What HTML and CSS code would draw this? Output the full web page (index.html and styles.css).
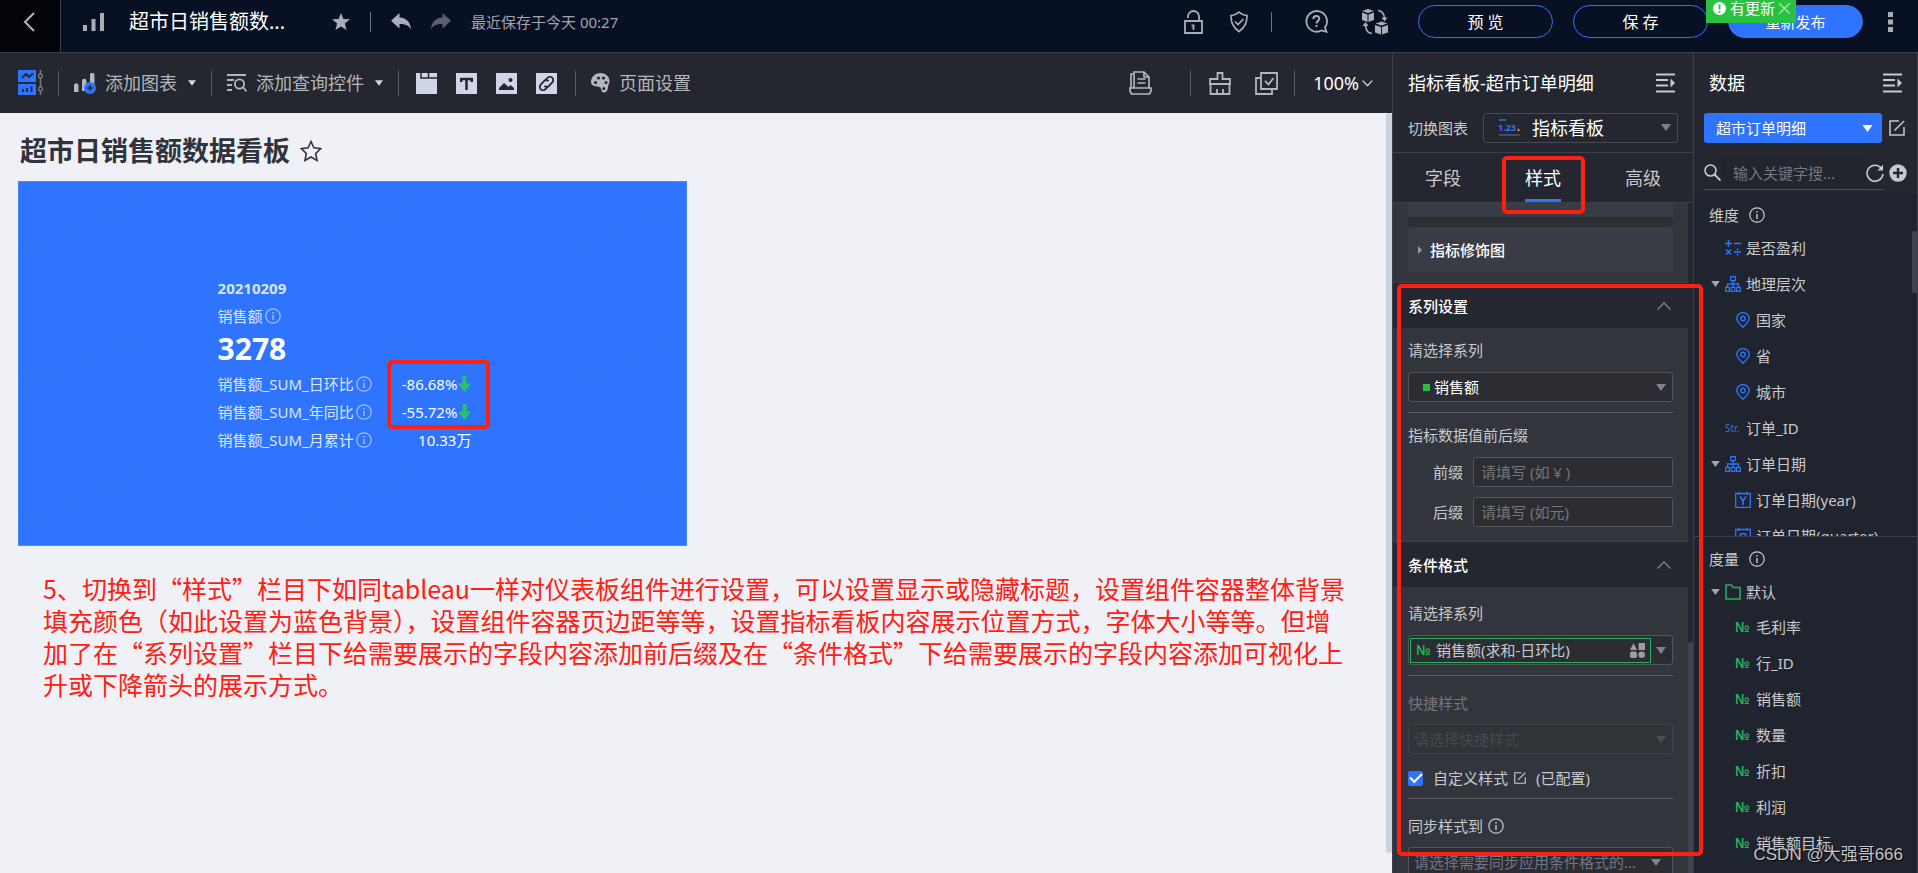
FILE: index.html
```html
<!DOCTYPE html>
<html lang="zh-CN">
<head>
<meta charset="utf-8">
<meta name="viewport" content="width=device-width, initial-scale=1">
<title>超市日销售额数据看板</title>
<link rel="stylesheet" href="styles.css">
</head>
<body>
<svg class="sprite" aria-hidden="true">
  <symbol id="caret" viewBox="0 0 10 7"><path d="M0 0h10L5 7z" fill="currentColor"/></symbol>
  <symbol id="chev-up" viewBox="0 0 14 8"><path d="M.5 7.5 7 1l6.500 6.500" fill="none" stroke="currentColor" stroke-width="1.300"/></symbol>
  <symbol id="info" viewBox="0 0 16 16"><circle cx="8" cy="8" r="7.200" fill="none" stroke="currentColor" stroke-width="1.200"/><path d="M8 7v5M8 4v1.600" stroke="currentColor" stroke-width="1.400"/></symbol>
  <symbol id="edit" viewBox="0 0 16 16"><path d="M10 1H1v14h14V7M15 1v0M5.500 10.500 15 1" fill="none" stroke="currentColor" stroke-width="1.500"/></symbol>
  <symbol id="collapse" viewBox="0 0 20 20"><path d="M0 1.500h19M0 7h12M0 12.500h12M0 18.500h19" stroke="currentColor" stroke-width="1.800"/><path d="M14.500 5.500 19 10l-4.500 4.500z" fill="currentColor"/></symbol>
  <symbol id="tree" viewBox="0 0 16 16"><path d="M5.700.7h4.600v4H5.700zM.7 11.300h3.600v4H.7zM6.200 11.300h3.600v4H6.200zM11.700 11.300h3.600v4h-3.600zM8 5v6M2.500 11V8h11v3" fill="none" stroke="currentColor" stroke-width="1.300"/></symbol>
  <symbol id="pin" viewBox="0 0 14 16"><path d="M7 15.200C3.500 11.800.8 9.500.8 6.600a6.200 6 0 0 1 12.400 0c0 2.900-2.700 5.200-6.200 8.600z" fill="none" stroke="currentColor" stroke-width="1.400"/><circle cx="7" cy="6.500" r="2.200" fill="none" stroke="currentColor" stroke-width="1.400"/></symbol>
  <symbol id="bars" viewBox="0 0 22 18"><path d="M0 12h4v6H0zM8.500 6h4v12h-4zM17 0h4v18h-4z" fill="currentColor"/></symbol>
  <symbol id="down" viewBox="0 0 13 16"><path d="M4.500 0h4v7.500H13L6.500 16 0 7.500h4.500z" fill="currentColor"/></symbol>
  <symbol id="undo" viewBox="0 0 20 17"><path d="M8.500 0v4.500C16 5 19.500 9.500 20 16.500c-2-3.800-5.500-5.500-11.500-5.500v4.500L0 7.800z" fill="currentColor"/></symbol>
</svg>

<header class="topbar">
  <a class="back" href="#" aria-label="返回"><svg width="12" height="20" viewBox="0 0 12 20"><path d="M11 1 2 10l9 9" fill="none" stroke="#b4b6ba" stroke-width="2"/></svg></a>
  <div class="topbar-left">
    <svg class="doc-icon" width="22" height="18"><use href="#bars"/></svg>
    <span class="doc-title">超市日销售额数...</span>
    <button class="icon-btn" aria-label="收藏"><svg width="18" height="17" viewBox="0 0 18 17"><path d="m9 0 2.400 5.900 6.600.4-5.100 4.200 1.700 6.400L9 13.400l-5.600 3.500 1.700-6.400L0 6.300l6.600-.4z" fill="#a9adb5"/></svg></button>
    <span class="rule"></span>
    <button class="icon-btn" aria-label="撤销"><svg width="20" height="17"><use href="#undo"/></svg></button>
    <button class="icon-btn dim" aria-label="重做"><svg class="flip" width="20" height="17"><use href="#undo"/></svg></button>
    <span class="saved">最近保存于今天 00:27</span>
  </div>
  <div class="topbar-icons">
    <button class="icon-btn" aria-label="锁定"><svg width="19" height="24" viewBox="0 0 19 24"><path d="M1 11h17v12H1zM4 8V6.500a5.500 5.500 0 0 1 11 0V11M9.500 15v5M7.500 15.500h3" fill="none" stroke="currentColor" stroke-width="1.800"/></svg></button>
    <button class="icon-btn" aria-label="权限"><svg width="18" height="22" viewBox="0 0 18 22"><path d="M9 1.200c2 1.900 4.500 3 8 3.500-.2 7-1.500 11-8 16-6.500-5-7.800-9-8-16 3.500-.5 6-1.600 8-3.500z" fill="none" stroke="currentColor" stroke-width="1.700"/><path d="m5 10.500 3 3 5.500-5.500" fill="none" stroke="currentColor" stroke-width="1.700"/></svg></button>
    <span class="rule"></span>
    <button class="icon-btn" aria-label="帮助"><svg width="23" height="23" viewBox="0 0 23 23"><path d="M20 17.500a10.300 10.300 0 1 0-3.500 3l5 1.300z" fill="none" stroke="currentColor" stroke-width="1.800"/><path d="M8.300 9c0-4 6-4 6-.4 0 2.400-2.800 2.200-2.800 5M11.500 15v2" fill="none" stroke="currentColor" stroke-width="2"/></svg></button>
    <button class="icon-btn" aria-label="资源迁移"><svg width="26" height="26" viewBox="0 0 26 26"><g fill="currentColor"><path d="m6 0 6 2-6 2-6-2zM0 3.500l5.500 2v7.500L0 11zM12 3.500l-5.500 2v7.500l5.500-2zM19.500 12.500l6 2-6 2-6-2zM13 16l6 2v7.500l-6-2zM26 16l-6 2v7.500l6-2z"/><path d="M19.500 8.500h6l-3 4zM.5 17h6l-3-4z"/></g><path d="M16 1.500c4 .5 6.200 3 6.500 8M10 24.500c-4-.5-6.200-3-6.500-8" fill="none" stroke="currentColor" stroke-width="1.600"/></svg></button>
  </div>
  <div class="topbar-actions">
    <button class="pill">预 览</button>
    <button class="pill">保 存</button>
    <div class="publish">
      <button class="pill primary">重新发布</button>
      <div class="update-tip"><svg width="13" height="13" viewBox="0 0 13 13"><circle cx="6.500" cy="6.500" r="6.500" fill="#fff"/><path d="M6.500 2.500v5M6.500 9v1.700" stroke="#2ac143" stroke-width="1.800"/></svg><span>有更新</span><button class="tip-close" aria-label="关闭"><svg width="11" height="11" viewBox="0 0 11 11"><path d="m0 0 11 11M11 0 0 11" stroke="#a5eaaf" stroke-width="1.300"/></svg></button></div>
    </div>
    <button class="icon-btn kebab" aria-label="更多"><svg width="5" height="20" viewBox="0 0 5 20"><path d="M0 0h5v5H0zM0 7.500h5v5H0zM0 15h5v5H0z" fill="currentColor"/></svg></button>
  </div>
</header>

<div class="workspace">
  <div class="editor">
    <div class="toolbar">
      <button class="icon-btn" aria-label="布局"><svg width="25" height="26" viewBox="0 0 25 26"><path d="M0 0h18v12H0zM0 14h18v11H0z" fill="#2e74ff"/><path d="m4 8 4-4 3 3 4-3.500" fill="none" stroke="#24272f" stroke-width="2"/><path d="M5 22v-3M9 22v-4M13.500 22v-5.500" stroke="#24272f" stroke-width="1.800"/><path d="M22.500 0v4M22.500 8v9M22.500 21v4" stroke="#77797d" stroke-width="1.600"/><circle cx="22.500" cy="6" r="2" fill="none" stroke="#77797d" stroke-width="1.300"/><circle cx="22.500" cy="19" r="2" fill="none" stroke="#77797d" stroke-width="1.300"/></svg></button>
      <span class="rule tall"></span>
      <button class="tool"><svg width="22" height="21" viewBox="0 0 22 21"><path d="M0 12.500a1.500 1.500 0 0 1 4.500 0V19H0zM8 8a2 2 0 0 1 4.500 0v10H8zM16 2a2 2 0 0 1 4.500 0v12H16z" fill="#b4b6ba"/><circle cx="16" cy="15" r="6" fill="#2e74ff"/><path d="M13 15h6M16 12v6" stroke="#24272f" stroke-width="1.500"/></svg><span>添加图表</span><svg class="tool-caret" width="8" height="6"><use href="#caret"/></svg></button>
      <span class="rule tall"></span>
      <button class="tool"><svg width="20" height="18" viewBox="0 0 20 18"><path d="M0 1h19M0 6h7M0 11h5M0 16h5" stroke="currentColor" stroke-width="1.800"/><circle cx="12.500" cy="10" r="4.600" fill="none" stroke="currentColor" stroke-width="1.800"/><path d="m16 13 3.500 4.500" stroke="currentColor" stroke-width="1.800"/></svg><span>添加查询控件</span><svg class="tool-caret" width="8" height="6"><use href="#caret"/></svg></button>
      <span class="rule tall"></span>
      <div class="widgets">
        <button class="icon-btn" aria-label="选项卡"><svg width="21" height="21" viewBox="0 0 21 21"><path d="M0 0h21v21H0z" fill="#d0d6e8"/><path d="M5 0v5h16M12.500 0v5" fill="none" stroke="#24272f" stroke-width="1.500"/></svg></button>
        <button class="icon-btn" aria-label="文本"><svg width="21" height="21" viewBox="0 0 21 21"><path d="M0 0h21v21H0z" fill="#d0d6e8"/><path d="M4.500 6h12M10.500 5v12M5.200 5v4M15.800 5v4" fill="none" stroke="#24272f" stroke-width="2.500"/></svg></button>
        <button class="icon-btn" aria-label="图片"><svg width="21" height="21" viewBox="0 0 21 21"><path d="M0 0h21v21H0z" fill="#d0d6e8"/><path d="M3 17v-2l5-5 4.500 4 2-2 3.500 3v2z" fill="#24272f"/><circle cx="14.500" cy="7" r="2" fill="#24272f"/></svg></button>
        <button class="icon-btn" aria-label="链接"><svg width="21" height="21" viewBox="0 0 21 21"><path d="M0 0h21v21H0z" fill="#d0d6e8"/><g fill="none" stroke="#24272f" stroke-width="1.800"><path d="m9 7.500 2.500-2.700a3.300 3.300 0 0 1 4.800 4.600L13 12.800a3 3 0 0 1-4.500 0"/><path d="m12 13.500-2.500 2.700a3.300 3.300 0 0 1-4.800-4.600L8 8.200a3 3 0 0 1 4.500 0"/></g></svg></button>
      </div>
      <span class="rule tall"></span>
      <button class="tool"><svg width="19" height="20" viewBox="0 0 19 20"><path d="M9.500 0C15 0 19 4 18.500 9c-.3 2.600-1.500 3-1.500 5 0 3-1.500 5.500-4 5.500-3.500 0-2-4.500-4.500-5.500S0 14 0 9c0-5 4-9 9.500-9z" fill="#b4b6ba"/><g fill="#24272f"><circle cx="4.500" cy="9.500" r="1.600"/><circle cx="7.500" cy="5" r="1.600"/><circle cx="12.500" cy="5" r="1.600"/><circle cx="15" cy="9.500" r="1.500"/><circle cx="12.800" cy="15.500" r="1.500"/></g></svg><span>页面设置</span></button>
      <div class="toolbar-right">
        <button class="icon-btn" aria-label="模板"><svg width="23" height="24" viewBox="0 0 23 24"><path d="M2 17V3h2M5 17V1h10l5 5v11M15 1v5h5M8.500 8h8M8.500 12h8M1 17h21v3l-1.500 3h-18L1 20z" fill="none" stroke="currentColor" stroke-width="1.700"/></svg></button>
        <span class="rule tall"></span>
        <button class="icon-btn" aria-label="清理"><svg width="22" height="23" viewBox="0 0 22 23"><path d="M8.500 7V1h5v6H21v5H1V7zM1.500 12v10h19V12M8 22v-5M14 22v-5" fill="none" stroke="currentColor" stroke-width="1.800"/></svg></button>
        <button class="icon-btn" aria-label="批量选择"><svg width="23" height="23" viewBox="0 0 23 23"><path d="M6 1h16v16H6zM6 6H1v16h16v-5M10 9l3.500 3.500 5-6.500" fill="none" stroke="currentColor" stroke-width="1.800"/></svg></button>
        <span class="rule tall"></span>
        <button class="zoom"><span>100%</span><svg width="11" height="7" viewBox="0 0 11 7"><path d="m.7.7 4.800 5 4.800-5" fill="none" stroke="#e8e8ea" stroke-width="1.200"/></svg></button>
      </div>
    </div>

    <main class="canvas">
      <div class="board-title"><h1>超市日销售额数据看板</h1><svg width="22" height="22" viewBox="0 0 22 22"><path d="m11 1.500 2.900 6.300 6.800.9-5 4.800 1.300 6.900-6-3.400-6 3.400 1.300-6.900-5-4.800 6.800-.9z" fill="none" stroke="#30333b" stroke-width="1.600"/></svg></div>
      <div class="board">
        <section class="card">
          <div class="marks" aria-hidden="true">
            <span>aliyun8203139630</span><span>aliyun8203139630</span><span>aliyun8203139630</span>
            <span>aliyun8203139630</span><span>aliyun8203139630</span><span>aliyun8203139630</span>
            <span>aliyun8203139630</span><span>aliyun8203139630</span><span>aliyun8203139630</span>
          </div>
          <div class="kpi">
            <div class="kpi-date">20210209</div>
            <div class="kpi-name">销售额<svg width="16" height="16"><use href="#info"/></svg></div>
            <div class="kpi-value">3278</div>
            <div class="kpi-box">
              <dl class="kpi-list">
                <dt>销售额_SUM_日环比<svg width="16" height="16"><use href="#info"/></svg></dt><dd>-86.68%<svg class="down" width="13" height="16"><use href="#down"/></svg></dd>
                <dt>销售额_SUM_年同比<svg width="16" height="16"><use href="#info"/></svg></dt><dd>-55.72%<svg class="down" width="13" height="16"><use href="#down"/></svg></dd>
                <dt>销售额_SUM_月累计<svg width="16" height="16"><use href="#info"/></svg></dt><dd>10.33万</dd>
              </dl>
              <span class="mark-box mark-trend"></span>
            </div>
          </div>
        </section>
      </div>
      <p class="note">5、切换到“样式”栏目下如同tableau一样对仪表板组件进行设置，可以设置显示或隐藏标题，设置组件容器整体背景<br>填充颜色（如此设置为蓝色背景），设置组件容器页边距等等，设置指标看板内容展示位置方式，字体大小等等。但增<br>加了在“系列设置”栏目下给需要展示的字段内容添加前后缀及在“条件格式”下给需要展示的字段内容添加可视化上<br>升或下降箭头的展示方式。</p>
      <span class="canvas-thumb"></span>
    </main>
  </div>

  <aside class="config">
    <div class="panel-head"><h2>指标看板-超市订单明细</h2><button class="icon-btn" aria-label="收起"><svg width="20" height="20"><use href="#collapse"/></svg></button></div>
    <div class="switch-row">
      <label for="chart">切换图表</label>
      <div class="field chart-field">
        <svg width="22" height="17" viewBox="0 0 22 17"><path d="M1 1h7" stroke="#2e5fc0" stroke-width="2"/><text x="0" y="12" class="svg-123">1.23</text><path d="m19 12 1.500-3 1.500 3z" fill="#f08c28"/><path d="M1 16h21" stroke="#55585f" stroke-width="1.500"/></svg>
        <select id="chart"><option>指标看板</option></select>
        <svg class="caret" width="10" height="7"><use href="#caret"/></svg>
      </div>
    </div>
    <nav class="tabs">
      <button class="tab">字段</button>
      <button class="tab active">样式</button>
      <button class="tab">高级</button>
      <span class="mark-box mark-tab"></span>
    </nav>
    <div class="config-body">
      <div class="group">
        <div class="stub"></div>
        <div class="stub-gap"></div>
        <button class="fold"><svg width="4" height="8" viewBox="0 0 4 8"><path d="M0 0v8l4-4z" fill="#999ba0"/></svg><span>指标修饰图</span></button>
      </div>
      <section>
        <h3 class="section-head">系列设置<svg width="14" height="8"><use href="#chev-up"/></svg></h3>
        <div class="section-body series">
          <label class="line" for="series">请选择系列</label>
          <div class="field"><span class="dot"></span><select id="series"><option>销售额</option></select><svg class="caret" width="10" height="7"><use href="#caret"/></svg></div>
          <hr>
          <div class="line">指标数据值前后缀</div>
          <div class="affix"><label for="prefix">前缀</label><input id="prefix" type="text" placeholder="请填写 (如 ¥ )"></div>
          <div class="affix"><label for="suffix">后缀</label><input id="suffix" type="text" placeholder="请填写 (如元)"></div>
        </div>
      </section>
      <section>
        <h3 class="section-head">条件格式<svg width="14" height="8"><use href="#chev-up"/></svg></h3>
        <div class="section-body cond">
          <label class="line" for="cond">请选择系列</label>
          <div class="field combo"><div class="chip"><span class="num">№</span><select id="cond"><option>销售额(求和-日环比)</option></select><svg width="15" height="15" viewBox="0 0 15 15"><path d="m3.500 0 3.500 7H0zM8.500 0H15v7H8.500zM1.500 8.500h4L7 10v4l-1.500 1h-4L0 14v-4z" fill="#9b9da1"/><circle cx="11.700" cy="11.700" r="3.300" fill="#9b9da1"/></svg></div><svg class="caret" width="10" height="7"><use href="#caret"/></svg></div>
          <hr>
          <label class="line off" for="quick">快捷样式</label>
          <div class="field off"><select id="quick" disabled><option>请选择快捷样式</option></select><svg class="caret" width="10" height="7"><use href="#caret"/></svg></div>
          <div class="check-row"><input id="custom" type="checkbox" checked><label for="custom">自定义样式</label><svg width="12" height="12"><use href="#edit"/></svg><span>(已配置)</span></div>
          <hr>
          <label class="line sync" for="sync">同步样式到<svg width="16" height="16"><use href="#info"/></svg></label>
          <div class="field hint"><select id="sync"><option>请选择需要同步应用条件格式的...</option></select><svg class="caret" width="10" height="7"><use href="#caret"/></svg></div>
        </div>
      </section>
      <span class="config-thumb"></span>
    </div>
    <span class="mark-box mark-config"></span>
  </aside>

  <aside class="data">
    <div class="panel-head"><h2>数据</h2><button class="icon-btn" aria-label="收起"><svg width="20" height="20"><use href="#collapse"/></svg></button></div>
    <div class="source-row">
      <div class="source"><select aria-label="数据集"><option>超市订单明细</option></select><svg width="11" height="7" viewBox="0 0 10 7"><use href="#caret"/></svg></div>
      <button class="icon-btn" aria-label="编辑数据集"><svg width="16" height="16"><use href="#edit"/></svg></button>
    </div>
    <div class="search-row">
      <div class="search"><svg width="17" height="17" viewBox="0 0 17 17"><circle cx="6.500" cy="6.500" r="5.500" fill="none" stroke="#c8c9cc" stroke-width="1.600"/><path d="m10.500 10.500 6 6" stroke="#c8c9cc" stroke-width="1.800"/></svg><input type="text" aria-label="搜索字段" placeholder="输入关键字搜..."><button class="icon-btn" aria-label="刷新"><svg width="18" height="18" viewBox="0 0 18 18"><path d="M15.500 4.500A8 8 0 1 0 17 10" fill="none" stroke="#c8c9cc" stroke-width="1.600"/><path d="M17 .8v5.700h-5.500z" fill="#c8c9cc"/></svg></button></div>
      <button class="icon-btn" aria-label="新增"><svg width="18" height="18" viewBox="0 0 18 18"><circle cx="9" cy="9" r="8.700" fill="#c8c9cc"/><path d="M4 9h10M9 4v10" stroke="#24272f" stroke-width="2.400"/></svg></button>
    </div>
    <section class="fields dims">
      <h3>维度<svg width="16" height="16"><use href="#info"/></svg></h3>
      <ul>
        <li><svg class="blue" width="16" height="16" viewBox="0 0 16 16"><path d="M0 3.500h7M3.500 0v7M9 3.500h7M1 9.500l5 5M6 9.500l-5 5M9 12h7M12.500 8.500v1.700M12.500 13.800v1.700" stroke="currentColor" stroke-width="1.500"/></svg><span>是否盈利</span></li>
        <li class="parent"><svg class="twist" width="9" height="6"><use href="#caret"/></svg><svg class="blue" width="16" height="16"><use href="#tree"/></svg><span>地理层次</span></li>
        <li class="child"><svg class="blue" width="16" height="16"><use href="#pin"/></svg><span>国家</span></li>
        <li class="child"><svg class="blue" width="16" height="16"><use href="#pin"/></svg><span>省</span></li>
        <li class="child"><svg class="blue" width="16" height="16"><use href="#pin"/></svg><span>城市</span></li>
        <li><span class="str">Str.</span><span>订单_ID</span></li>
        <li class="parent"><svg class="twist" width="9" height="6"><use href="#caret"/></svg><svg class="blue" width="16" height="16"><use href="#tree"/></svg><span>订单日期</span></li>
        <li class="child"><svg class="blue" width="16" height="16" viewBox="0 0 16 16"><path d="M.7 1.500h14.600v13.800H.7zM4 0v3M12 0v3" fill="none" stroke="currentColor" stroke-width="1.300"/><path d="m5 4.500 3 4.500 3-4.500M8 9v4" fill="none" stroke="currentColor" stroke-width="1.600"/></svg><span>订单日期(year)</span></li>
        <li class="child"><svg class="blue" width="16" height="16" viewBox="0 0 16 16"><path d="M.7 1.500h14.600v13.800H.7zM4 0v3M12 0v3" fill="none" stroke="currentColor" stroke-width="1.300"/><circle cx="8" cy="8.500" r="3" fill="none" stroke="currentColor" stroke-width="1.600"/></svg><span>订单日期(quarter)</span></li>
      </ul>
      <span class="data-thumb"></span>
    </section>
    <section class="fields measures">
      <h3>度量<svg width="16" height="16"><use href="#info"/></svg></h3>
      <ul>
        <li class="parent"><svg class="twist" width="9" height="6"><use href="#caret"/></svg><svg class="green" width="16" height="16" viewBox="0 0 16 16"><path d="M1 15V1h5.500l1.500 2.500h7V15z" fill="none" stroke="currentColor" stroke-width="1.500"/></svg><span>默认</span></li>
        <li class="child"><span class="num">№</span><span>毛利率</span></li>
        <li class="child"><span class="num">№</span><span>行_ID</span></li>
        <li class="child"><span class="num">№</span><span>销售额</span></li>
        <li class="child"><span class="num">№</span><span>数量</span></li>
        <li class="child"><span class="num">№</span><span>折扣</span></li>
        <li class="child"><span class="num">№</span><span>利润</span></li>
        <li class="child"><span class="num">№</span><span>销售额目标</span></li>
      </ul>
    </section>
    <span class="credit">CSDN @大强哥666</span>
  </aside>
</div>
</body>
</html>
```

FILE: styles.css
```css
* { box-sizing: border-box; }

body {
  margin: 0;
  height: 100vh;
  overflow: hidden;
  display: flex;
  flex-direction: column;
  background: #24272f;
  color: #c8c9cc;
  font: 15px/20px "Noto Sans", "Noto Sans CJK SC", sans-serif;
}

button, input, select {
  margin: 0;
  padding: 0;
  border: 0;
  background: none;
  color: inherit;
  font: inherit;
}

select { appearance: none; min-width: 0; flex: 1; height: 28px; outline: 0; opacity: 1; }
input { outline: 0; min-width: 0; }
h1, h2, h3, p, ul, dl, dd { margin: 0; padding: 0; font-weight: 400; }
svg { flex: none; display: block; }
.sprite { position: absolute; width: 0; height: 0; }
.icon-btn { display: flex; flex: none; color: #a9adb5; }
.rule { flex: none; width: 1px; height: 20px; background: #70747c; }
.rule.tall { height: 25px; background: #5a5d63; }

.mark-box {
  position: absolute;
  z-index: 5;
  border: 4px solid #fe2012;
  border-radius: 5px;
  pointer-events: none;
}

/* top bar */
.topbar {
  flex: none;
  display: flex;
  height: 53px;
  background: #081024;
  border-bottom: 1px solid #3d404b;
}
.back {
  width: 61px;
  padding: 12px 0 0 23px;
  background: #02040a;
  border-right: 1px solid #3d404b;
}
.topbar-left, .topbar-icons, .topbar-actions {
  display: flex;
  align-items: center;
  height: 43px;
}
.topbar-left { flex: 1; gap: 20px; padding-left: 22px; }
.doc-icon { color: #a9adb5; }
.doc-title { width: 183px; margin-left: 4px; color: #fff; font-size: 20px; line-height: 28px; white-space: nowrap; }
.dim { opacity: .5; }
.flip { transform: scaleX(-1); }
.saved { color: #a2a5ad; white-space: nowrap; }
.topbar-icons { gap: 27px; padding-right: 30px; }
.topbar-icons .rule { margin: 0 6px 0 -4px; }
.topbar-icons .icon-btn:last-child { margin-left: 7px; }
.topbar-actions { gap: 20px; padding-right: 25px; }
.pill {
  width: 135px;
  height: 33px;
  border: 1px solid #2e74ff;
  border-radius: 17px;
  color: #fff;
  font-size: 16px;
}
.pill.primary { background: #2e74ff; font-size: 15px; }
.publish { position: relative; }
.update-tip {
  position: absolute;
  top: -5px;
  left: -22px;
  z-index: 2;
  display: flex;
  align-items: center;
  gap: 4px;
  height: 23px;
  padding: 0 6px 7px 7px;
  background: #2ac143;
  color: #fff;
  white-space: nowrap;
}
.tip-close { display: flex; }
.kebab { margin-left: 5px; }

/* workspace */
.workspace { flex: 1; min-height: 0; display: flex; }
.editor { flex: 1; min-width: 0; display: flex; flex-direction: column; }
.toolbar {
  flex: none;
  display: flex;
  align-items: center;
  gap: 15px;
  height: 60px;
  padding: 0 19px 0 18px;
  color: #b4b6ba;
}
.tool { display: flex; align-items: center; gap: 9px; font-size: 18px; line-height: 26px; white-space: nowrap; }
.tool-caret { color: #d0d6e8; margin-left: 2px; }
.widgets { display: flex; gap: 19px; padding: 0 3px 0 2px; }
.toolbar-right { display: flex; align-items: center; gap: 18px; margin-left: auto; }
.toolbar-right .icon-btn { color: #b4b6ba; }
.toolbar-right .icon-btn:first-child { margin-right: 20px; }
.toolbar-right .icon-btn + .icon-btn { margin: 0 -2px 0 6px; }
.zoom { display: flex; align-items: center; gap: 3px; color: #fff; font-size: 18px; line-height: 26px; }

.canvas {
  position: relative;
  flex: 1;
  min-height: 0;
  overflow: hidden;
  padding: 18px 24px 0 18px;
  background: #eff1f6;
}
.canvas-thumb { position: absolute; top: 0; right: 0; bottom: 20px; width: 6px; background: #cdd2de; border-radius: 3px; }
.board-title { display: flex; align-items: center; gap: 10px; padding-left: 2px; color: #30333b; }
.board-title h1 { font-size: 27px; line-height: 40px; font-weight: 600; }
.board { display: grid; grid-template-columns: 1fr 1fr; gap: 12px; margin-top: 10px; }
.card {
  position: relative;
  display: flex;
  align-items: center;
  justify-content: center;
  min-height: 365px;
  background: #2e74ff;
  border: 1px solid #4488fb;
  overflow: hidden;
}
.marks {
  position: absolute;
  inset: 0;
  display: grid;
  grid-template: repeat(3, 136px) / repeat(3, 272px);
  align-content: start;
  color: rgba(90, 110, 160, .22);
}
.marks span { place-self: start; width: 134px; margin: 31px 0 0 -2px; transform: rotate(-23deg); }
.kpi { position: relative; padding-right: 16px; color: #fff; line-height: 28px; }
.kpi-date { font-weight: 700; color: #d8e5ff; }
.kpi-name, .kpi-list dt { display: flex; align-items: center; gap: 2px; color: #dbe7ff; }
.kpi svg { color: #a5c4ff; }
.kpi-value { font-size: 30px; font-weight: 700; line-height: 38px; padding-bottom: 2px; }
.kpi-box { position: relative; }
.kpi-list { display: grid; grid-template-columns: auto auto; column-gap: 30px; }
.kpi-list dd { display: flex; align-items: center; justify-content: flex-end; gap: 1px; white-space: nowrap; }
.kpi .down { color: #27c26b; }
.mark-trend { top: -10px; right: -19px; width: 103px; height: 69px; }
.note {
  margin: 26px 0 0 25px;
  color: #fe2012;
  font: 25px/32px "Noto Sans CJK SC", sans-serif;
  white-space: nowrap;
}

/* configuration panel */
.config {
  position: relative;
  flex: none;
  width: 301px;
  display: flex;
  flex-direction: column;
  border-left: 1px solid #3d404b;
}
.panel-head { flex: none; display: flex; align-items: center; justify-content: space-between; height: 60px; padding: 0 17px 0 15px; }
.panel-head h2 { color: #fff; font-size: 18px; line-height: 26px; white-space: nowrap; }
.panel-head .icon-btn { color: #c8c9cc; }
.field {
  display: flex;
  align-items: center;
  height: 30px;
  padding: 0 6px 0 5px;
  border: 1px solid #52555b;
  border-radius: 3px;
  background: #2c2d32;
  color: #fff;
}
.caret { color: #7d8190; }
.switch-row { flex: none; display: flex; align-items: center; gap: 15px; height: 40px; padding: 0 15px 10px; border-bottom: 1px solid #3d4046; }
.chart-field { flex: 1; gap: 12px; padding-left: 14px; background: none; font-size: 18px; border-color: #484b52; }
.svg-123 { font: 700 9px "Noto Sans", sans-serif; fill: #2e74ff; }
.tabs { position: relative; flex: none; display: flex; justify-content: space-between; height: 50px; padding: 0 32px; border-bottom: 1px solid #3d4046; }
.tab { border-bottom: 3px solid transparent; padding-top: 4px; font-size: 18px; }
.tab.active { color: #fff; border-color: #2e74ff; }
.mark-tab { top: 3px; left: 109px; width: 83px; height: 58px; }
.mark-config { top: 231px; right: -10px; bottom: 17px; left: 4px; }

.config-body { position: relative; flex: 1; min-height: 0; overflow: hidden; padding-right: 5px; }
.config-thumb { position: absolute; right: 0; bottom: 0; top: 439px; width: 5px; background: #41444f; border-radius: 3px 3px 0 0; }
.group { padding: 0 15px 10px; background: #32353c; border-bottom: 1px solid #3f4248; }
.stub { height: 14px; background: #393c44; }
.stub-gap { height: 10px; background: #2d2e33; }
.fold { display: flex; align-items: center; gap: 8px; width: 100%; height: 45px; padding-left: 10px; border-radius: 3px; background: #393c44; color: #fff; font-weight: 500; }
.section-head { display: flex; align-items: center; justify-content: space-between; height: 45px; padding: 0 17px 0 15px; color: #fff; font-size: 15px; font-weight: 500; }
.section-head svg { color: #7d8190; }
.section-body { display: flex; flex-direction: column; padding: 0 15px; background: #32353c; }
.section-body hr { align-self: stretch; height: 1px; margin: 10px 0 0; border: 0; background: #5a5d63; }
.line { display: flex; align-items: center; gap: 5px; height: 44px; }
.series { padding-bottom: 14px; border-bottom: 1px solid #3f4248; }
.series .field { padding-left: 14px; gap: 4px; }
.series > .line + .affix { margin-top: 0; }
.dot { width: 7px; height: 7px; background: #2ac143; }
.affix { display: flex; align-items: center; gap: 10px; margin-top: 10px; padding-left: 25px; }
.affix input { flex: 1; height: 30px; padding: 0 7px; border: 1px solid #52555b; border-radius: 3px; background: #2c2d32; }
::placeholder { color: #74767c; opacity: 1; }
.cond { padding-top: 4px; }
.combo { padding-left: 1px; }
.chip { flex: 1; display: flex; align-items: center; gap: 4px; height: 25px; margin-right: 5px; padding: 0 5px; border: 1px solid #27b15c; color: #c8c9cc; }
.chip select { height: 23px; }
.num { flex: none; width: 16px; color: #27b15c; font-size: 14px; font-weight: 600; }
.cond hr + .line { height: 48px; padding-top: 5px; }
.off { color: #74767c; }
.field.off { border-color: #3f4248; background: #303338; color: #45484f; }
.field.off .caret { color: #4d505a; }
.check-row { display: flex; align-items: center; gap: 6px; height: 20px; margin-top: 14px; }
.check-row input {
  appearance: none;
  display: grid;
  place-items: center;
  width: 15px;
  height: 15px;
  margin-right: 4px;
  border-radius: 2px;
  background: #2e74ff;
}
.check-row input::after { content: ""; width: 10px; height: 5px; margin-top: -3px; border: solid #fff; border-width: 0 0 2px 2px; transform: rotate(-45deg); }
.check-row span { margin-left: 4px; }
.hint { color: #6f768a; }
.hint .caret { margin-right: 5px; }

/* data panel */
.data { position: relative; flex: none; width: 225px; display: flex; flex-direction: column; border-left: 1px solid #3d404b; border-right: 1px solid #3d404b; }
.data .panel-head { padding-right: 14px; }
.source-row { flex: none; display: flex; align-items: center; gap: 7px; padding: 0 12px 0 10px; }
.source { flex: 1; display: flex; align-items: center; height: 30px; padding: 0 9px 0 12px; border-radius: 3px; background: #2e74ff; color: #fff; }
.source-row .icon-btn { color: #c8c9cc; }
.search-row { flex: none; display: flex; align-items: center; gap: 5px; padding: 13px 10px 4px; }
.search { flex: 1; min-width: 0; display: flex; align-items: center; height: 34px; border-bottom: 1px solid #4a4d53; }
.search input { flex: 1; height: 32px; padding-left: 12px; background: #22252d; }
.fields { position: relative; min-height: 0; overflow: hidden; background: #20242e; }
.dims { flex: 343; padding-top: 5px; border-bottom: 1px solid #3d404b; }
.measures { flex: 335; padding-top: 6px; }
.fields h3 { display: flex; align-items: center; gap: 10px; height: 32px; padding-left: 15px; font-size: 15px; }
.dims h3 { height: 31px; }
.fields ul { list-style: none; }
.fields li { display: flex; align-items: center; gap: 5px; height: 36px; padding-left: 31px; white-space: nowrap; }
.fields .parent { padding-left: 17px; }
.fields .child { padding-left: 41px; }
.measures .parent { height: 34px; }
.twist { color: #a2a5ab; }
.blue { color: #2e74ff; }
.green { color: #27b15c; }
.str { width: 16px; color: #3a6fd8; font-size: 10px; }
.data-thumb { position: absolute; top: 37px; right: 0; width: 5px; height: 62px; background: #41444f; border-radius: 3px; }
.credit {
  position: absolute;
  right: 14px;
  bottom: 7px;
  z-index: 6;
  color: #c3c4c8;
  font: 17px/22px "Liberation Sans", "Noto Sans CJK SC", sans-serif;
  text-shadow: 1px 1px 1px #000;
  white-space: nowrap;
}
```
